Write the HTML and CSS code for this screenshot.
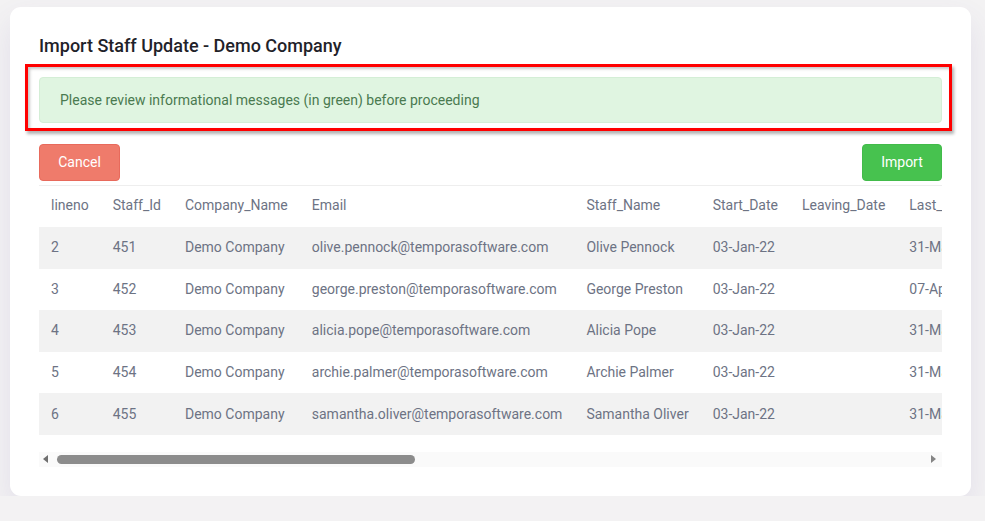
FILE: index.html
```html
<!DOCTYPE html>
<html lang="en">
<head>
  <meta charset="UTF-8">
  <meta name="viewport" content="width=device-width, initial-scale=1.0">
  <title>Import Staff Update - Demo Company</title>
  <link rel="stylesheet" href="styles.css">
</head>
<body>
  <div class="card">
    <h1>Import Staff Update - Demo Company</h1>

    <div class="highlight">
      <div class="alert">Please review informational messages (in green) before proceeding</div>
    </div>

    <div class="actions">
      <button class="btn btn-cancel">Cancel</button>
      <button class="btn btn-import">Import</button>
    </div>

    <div class="table-wrap">
      <table class="staff-table">
        <thead>
          <tr>
            <th>lineno</th>
            <th>Staff_Id</th>
            <th>Company_Name</th>
            <th>Email</th>
            <th>Staff_Name</th>
            <th>Start_Date</th>
            <th>Leaving_Date</th>
            <th>Last_Day</th>
          </tr>
        </thead>
        <tbody>
          <tr>
            <td>2</td><td>451</td><td>Demo Company</td><td>olive.pennock@temporasoftware.com</td>
            <td>Olive Pennock</td><td>03-Jan-22</td><td></td><td>31-Mar-22</td>
          </tr>
          <tr>
            <td>3</td><td>452</td><td>Demo Company</td><td>george.preston@temporasoftware.com</td>
            <td>George Preston</td><td>03-Jan-22</td><td></td><td>07-Apr-22</td>
          </tr>
          <tr>
            <td>4</td><td>453</td><td>Demo Company</td><td>alicia.pope@temporasoftware.com</td>
            <td>Alicia Pope</td><td>03-Jan-22</td><td></td><td>31-Mar-22</td>
          </tr>
          <tr>
            <td>5</td><td>454</td><td>Demo Company</td><td>archie.palmer@temporasoftware.com</td>
            <td>Archie Palmer</td><td>03-Jan-22</td><td></td><td>31-Mar-22</td>
          </tr>
          <tr>
            <td>6</td><td>455</td><td>Demo Company</td><td>samantha.oliver@temporasoftware.com</td>
            <td>Samantha Oliver</td><td>03-Jan-22</td><td></td><td>31-Mar-22</td>
          </tr>
        </tbody>
      </table>
    </div>

    <!-- horizontal scroller under the table -->
    <div class="scrollbar">
      <span class="arrow arrow-left"></span>
      <span class="thumb"></span>
      <span class="arrow arrow-right"></span>
    </div>
  </div>
</body>
</html>
```

FILE: styles.css
```css
* {
  margin: 0;
  padding: 0;
  box-sizing: border-box;
  font-family: 'Roboto', 'Liberation Sans', sans-serif;
}

body {
  background-color: #f3f2f3;
  color: #212529;
}

.card {
  width: 961px;
  margin: 7px 0 0 10px;
  padding: 28px 29px 29px;
  background: #fff;
  border-radius: 11px;
  box-shadow: 0 14px 30px rgba(90, 70, 160, 0.11);
}

h1 {
  font-size: 18px;
  font-weight: 500;
  line-height: 22px;
  color: #1f2229;
  margin-bottom: 7px;
}

/* red outline drawn round the notice */
.highlight {
  margin: 0 -10px 0 -14px;
  padding: 10px 7px 5px 11px;
  border: 3px solid #f00;
  box-shadow: 2px 3px 3px rgba(0, 0, 0, 0.3), inset 2px 2px 3px rgba(0, 0, 0, 0.22);
}

.alert {
  height: 46px;
  display: flex;
  align-items: center;
  padding-left: 20px;
  background: #e0f5e1;
  border: 1px solid #d4eed6;
  border-radius: 4px;
  color: #4a7a50;
  font-size: 14px;
}

.actions {
  display: flex;
  justify-content: space-between;
  margin-top: 13px;
  margin-bottom: 4px;
}

.btn {
  height: 37px;
  padding-bottom: 2px;
  border: 1px solid transparent;
  border-radius: 4px;
  color: #fff;
  font-size: 14px;
  cursor: pointer;
}

.btn-cancel {
  width: 81px;
  background: #ef7b6b;
  border-color: #e86a5c;
}

.btn-import {
  width: 80px;
  background: #47c24f;
  border-color: #42bb4a;
}

.table-wrap {
  overflow: hidden;
  border-top: 1px solid #eee;
}

.staff-table {
  border-collapse: collapse;
  white-space: nowrap;
  font-size: 14px;
  color: #6d7384;
}

.staff-table th,
.staff-table td {
  text-align: left;
  font-weight: 400;
  padding: 12px;
  line-height: 17px;
}

.staff-table td {
  height: 41.6px;
}

.staff-table th {
  height: 41px;
  padding-top: 11px;
  padding-bottom: 13px;
}

.staff-table tbody tr:nth-child(odd) {
  background: #f2f2f2;
}

.scrollbar {
  display: flex;
  align-items: center;
  height: 15px;
  margin-top: 17px;
  padding: 0 6px 0 4px;
  background: #fafafa;
}

.arrow {
  width: 0;
  height: 0;
  border-top: 4px solid transparent;
  border-bottom: 4px solid transparent;
}

.arrow-left {
  border-right: 5px solid #6f6f6f;
}

.arrow-right {
  margin-left: auto;
  border-left: 5px solid #858585;
}

.thumb {
  width: 358px;
  height: 9px;
  margin-left: 9px;
  border-radius: 5px;
  background: #8c8c8c;
}
```
